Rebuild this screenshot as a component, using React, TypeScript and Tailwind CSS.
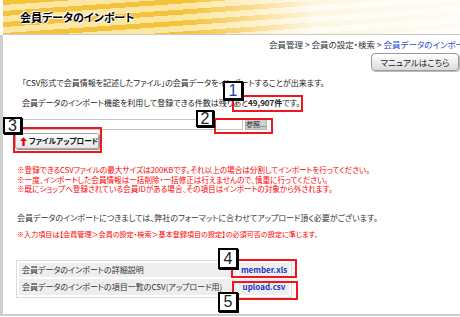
import React from 'react';

const Tag = ({ n, className }: { n: string; className: string }) => (
    <div
        className={`absolute flex items-center justify-center bg-white border-2 border-black shadow-[1px_1px_0_#000] text-[16px] leading-none font-['Liberation_Sans',Arial,sans-serif] ${className}`}
    >
        {n}
    </div>
);

const RedBox = ({ className }: { className: string }) => (
    <div className={`absolute border-2 border-[#f0161c] ${className}`} />
);

export default function App() {
    return (
        <div className="relative w-[460px] h-[317px] overflow-hidden bg-white text-[#222] font-['Noto_Sans_CJK_JP',sans-serif] [font-feature-settings:'palt']">
            {/* banner */}
            <div className="ml-[3px] h-[35px] border-b border-[#c9c9c9] flex items-center pl-[17px] bg-[linear-gradient(90deg,rgba(255,255,255,0)_0%,rgba(255,255,255,0)_40%,rgba(255,255,255,0.85)_68%,rgba(255,255,255,0.95)_100%),repeating-linear-gradient(176deg,#f4c23c_0px,#f4c23c_5px,#fce7a2_5px,#fce7a2_11px)]">
                <h1 className="text-[11px] font-bold text-black [text-shadow:0_0_2px_#fff,1px_1px_0_#fff,-1px_-1px_0_#fff]">
                    会員データのインポート
                </h1>
            </div>

            <div className="h-[281px] border-l-[3px] border-b-2 border-[#cfcfcf] flex flex-col">
                {/* breadcrumb */}
                <div className="mt-[3px] pl-[266px] whitespace-nowrap overflow-hidden text-[8.5px] leading-[12px] text-[#333]">
                    会員管理 &gt; 会員の設定・検索 &gt; <span className="text-[#2f4fd0]">会員データのインポート</span>
                </div>

                <div className="mt-[3px] flex justify-end pr-[1px]">
                    <button className="w-[88px] h-[18px] rounded-[4px] border border-[#9a9a9a] bg-[linear-gradient(#ffffff,#dcdcdc)] text-[8.5px] leading-none text-[#222] shadow-[1px_1px_0_#bbb]">
                        マニュアルはこちら
                    </button>
                </div>

                <div className="mt-[6px] pl-[19px] flex flex-col gap-[8px] text-[8px] leading-[12px] whitespace-nowrap">
                    <p>「CSV形式で会員情報を記述したファイル」の会員データをインポートすることが出来ます。</p>
                    <p>
                        会員データのインポート機能を利用して登録できる件数は残りあと<b>49,907件</b>です。
                    </p>
                </div>

                {/* file input */}
                <div className="mt-[10px] ml-[4px] flex items-center gap-[2px]">
                    <div className="w-[236px] h-[11px] border border-[#c4c4c4] bg-white" />
                    <div className="w-[22px] h-[11px] bg-[#d0d0d0] border border-[#b5b5b5] text-[7px] leading-[9px] text-center whitespace-nowrap">
                        参照...
                    </div>
                </div>

                <button className="mt-[3px] ml-[12px] w-[84px] h-[16px] flex items-center gap-[2px] pl-[4px] rounded-[2px] border border-[#a8a8a8] bg-[linear-gradient(#ffffff,#e6e6e6)] shadow-[1px_1px_0_#999] text-[7.6px] font-bold leading-none text-[#111] whitespace-nowrap">
                    <svg width="7" height="9" viewBox="0 0 8 10" className="shrink-0">
                        <path d="M4 0 L8 4.5 L5.3 4.5 L5.3 10 L2.7 10 L2.7 4.5 L0 4.5 Z" fill="#e60012" />
                    </svg>
                    ファイルアップロード
                </button>

                <div className="mt-[16px] pl-[14px] flex flex-col text-[7.6px] leading-[9.5px] text-[#ff0000] whitespace-nowrap">
                    <p>※登録できるCSVファイルの最大サイズは200KBです。それ以上の場合は分割してインポートを行ってください。</p>
                    <p>※一度、インポートした会員情報は一括削除・一括修正は行えませんので、慎重に行ってください。</p>
                    <p>※既にショップへ登録されている会員IDがある場合、その項目はインポートの対象から外されます。</p>
                </div>

                <div className="mt-[18px] pl-[14px] flex flex-col gap-[4px] leading-[12px] whitespace-nowrap">
                    <p className="text-[8px] text-[#333]">
                        会員データのインポートにつきましては、弊社のフォーマットに合わせてアップロード頂く必要がございます。
                    </p>
                    <p className="text-[7.1px] text-[#ff0000]">
                        ※入力項目は【会員管理＞会員の設定・検索＞基本登録項目の設定】の必須可否の設定に準じます。
                    </p>
                </div>

                {/* table */}
                <table className="mt-[20px] ml-[13px] self-start border border-[#dcdcdc] border-separate border-spacing-[2px] text-[8px] leading-none whitespace-nowrap">
                    <tbody>
                        <tr>
                            <td className="w-[218px] h-[14px] bg-[#eeeeee] pl-[3px] text-[#333]">会員データのインポートの詳細説明</td>
                            <td className="w-[50px] bg-[#eeeeee] text-center font-semibold text-[#2433c8]">member.xls</td>
                        </tr>
                        <tr>
                            <td className="h-[16px] bg-[#eeeeee] pl-[3px] text-[#333]">会員データのインポートの項目一覧のCSV(アップロード用)</td>
                            <td className="bg-[#eeeeee] text-center font-semibold text-[#2433c8]">upload.csv</td>
                        </tr>
                    </tbody>
                </table>
            </div>

            {/* annotations */}
            <RedBox className="left-[232px] top-[95px] w-[71px] h-[17px]" />
            <RedBox className="left-[214px] top-[118px] w-[59px] h-[16px]" />
            <RedBox className="left-[13px] top-[127px] w-[89px] h-[26px]" />
            <RedBox className="left-[231px] top-[259px] w-[66px] h-[19px]" />
            <RedBox className="left-[232px] top-[281px] w-[66px] h-[19px]" />

            <Tag n="1" className="left-[223px] top-[81px] w-[20px] h-[19px] text-[#1f3fa8]" />
            <Tag n="2" className="left-[196px] top-[110px] w-[18px] h-[17px]" />
            <Tag n="3" className="left-[3px] top-[117px] w-[19px] h-[17px]" />
            <Tag n="4" className="left-[218px] top-[248px] w-[20px] h-[21px]" />
            <Tag n="5" className="left-[218px] top-[292px] w-[20px] h-[20px]" />
        </div>
    );
}
